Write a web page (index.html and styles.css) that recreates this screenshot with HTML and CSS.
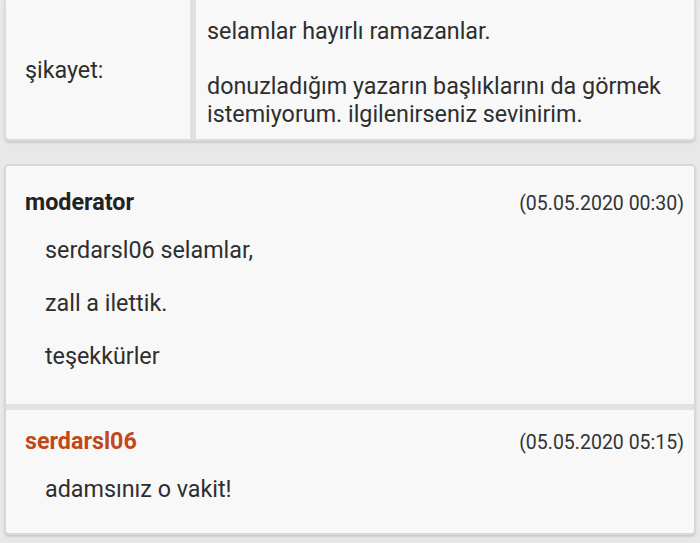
FILE: index.html
```html
<!DOCTYPE html>
<html lang="tr">
<head>
<meta charset="utf-8">
<link rel="stylesheet" href="styles.css">
</head>
<body>
<div class="detail-card">
  <div class="detail-label">şikayet:</div>
  <div class="detail-value">
    <p>selamlar hayırlı ramazanlar.</p>
    <p>donuzladığım yazarın başlıklarını da görmek istemiyorum. ilgilenirseniz sevinirim.</p>
  </div>
</div>

<div class="thread">
  <div class="message message-first">
    <div class="message-head">
      <span class="author">moderator</span>
      <span class="date">(05.05.2020 00:30)</span>
    </div>
    <div class="message-body">
      <p>serdarsl06 selamlar,</p>
      <p>zall a ilettik.</p>
      <p>teşekkürler</p>
    </div>
  </div>
  <div class="message message-last">
    <div class="message-head">
      <span class="author author-user">serdarsl06</span>
      <span class="date">(05.05.2020 05:15)</span>
    </div>
    <div class="message-body">
      <p>adamsınız o vakit!</p>
    </div>
  </div>
</div>
</body>
</html>
```
FILE: styles.css
```css
html, body {
  margin: 0;
  padding: 0;
}
body {
  background: #e8e8e8;
  font-family: Roboto, "Noto Sans", sans-serif;
  color: #2e2e2e;
  font-size: 23.3px;
  line-height: 28px;
  height: 543px;
  overflow: hidden;
}
p {
  margin: 0;
}

.detail-card {
  margin: 0 4px;
  display: grid;
  grid-template-columns: 184px 1fr;
  column-gap: 6px;
  background: #e0e0e0;
  border: 2px solid #dcdcdc;
  border-top: 0;
  border-radius: 0 0 5px 5px;
  box-shadow: 0 2px 2px rgba(0,0,0,0.12);
  height: 141px;
  box-sizing: border-box;
}
.detail-label {
  background: #f8f8f8;
  display: flex;
  align-items: center;
  padding-left: 19px;
  border-bottom-left-radius: 4px;
}
.detail-value {
  background: #f8f8f8;
  padding: 17px 10px 0 11px;
  border-bottom-right-radius: 4px;
}
.detail-value p + p {
  margin-top: 27px;
}

.thread {
  margin: 23px 4px 0;
  background: #e2e2e2;
  border: 2px solid #d8d8d8;
  border-radius: 5px;
  box-shadow: 0 2px 2px rgba(0,0,0,0.12);
  display: flex;
  flex-direction: column;
  gap: 6px;
  overflow: hidden;
}
.message {
  background: #f8f8f8;
  padding: 0 10px 0 19px;
}
.message-first {
  padding-top: 22px;
  padding-bottom: 34px;
}
.message-last {
  padding-top: 17px;
  padding-bottom: 30px;
}
.message-head {
  display: flex;
  justify-content: space-between;
  align-items: baseline;
}
.author {
  font-weight: 700;
  color: #222;
}
.author-user {
  color: #c24819;
}
.date {
  font-size: 19.5px;
  color: #333;
}
.message-body {
  margin-top: 18px;
  padding-left: 20px;
}
.message-body p + p {
  margin-top: 25px;
}
```
